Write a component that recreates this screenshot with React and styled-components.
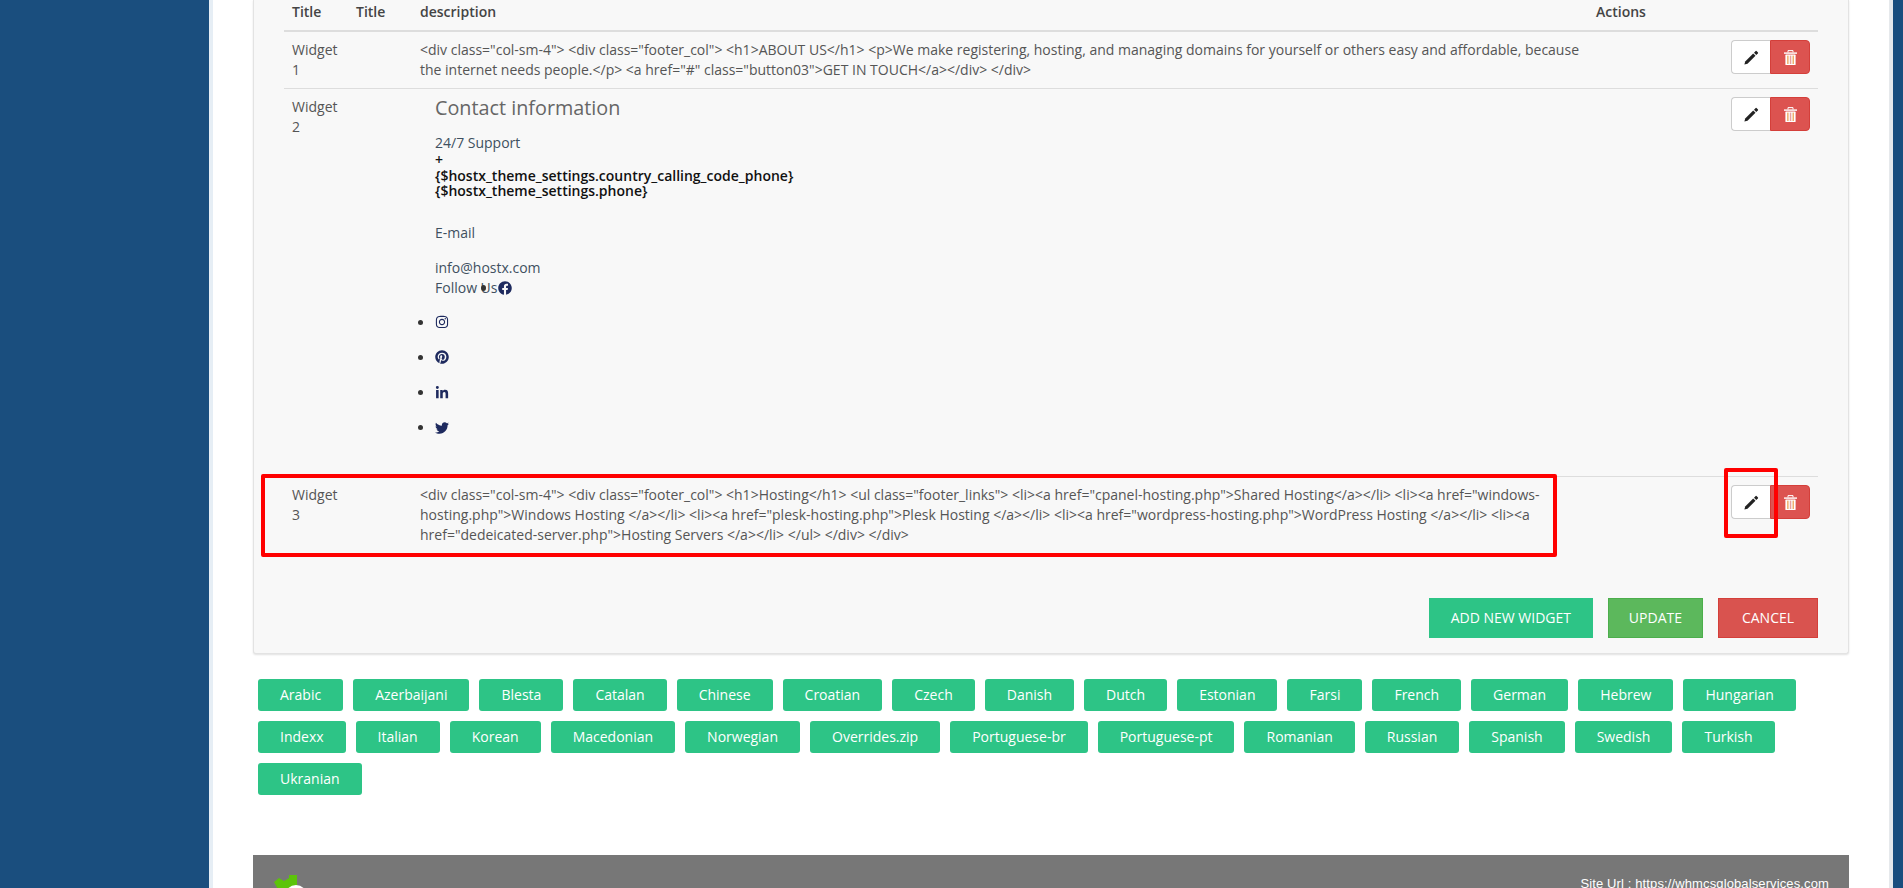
import styled, { createGlobalStyle } from "styled-components";
import { FaFacebook, FaInstagram, FaPinterest, FaLinkedinIn, FaTwitter } from "react-icons/fa";

const languages = [
  "Arabic", "Azerbaijani", "Blesta", "Catalan", "Chinese", "Croatian", "Czech", "Danish", "Dutch", "Estonian",
  "Farsi", "French", "German", "Hebrew", "Hungarian", "Indexx", "Italian", "Korean", "Macedonian", "Norwegian",
  "Overrides.zip", "Portuguese-br", "Portuguese-pt", "Romanian", "Russian", "Spanish", "Swedish", "Turkish", "Ukranian",
];

const GlobalStyle = createGlobalStyle`
  html, body { margin: 0; padding: 0; height: 100%; overflow: hidden; background: #fff; }
  body { font-family: "Open Sans", "Liberation Sans", sans-serif; font-size: 14px; line-height: 20px; color: #555; }
  * { box-sizing: border-box; }
`;

function PencilIcon() {
  return (
    <svg width="15" height="15" viewBox="0 0 15 15">
      <path d="M0.4 14.6 L1.2 11.5 L9.2 3.5 L11.5 5.8 L3.5 13.8 Z" fill="#222" />
      <path d="M10 2.7 L11.7 1 Q12.1 0.7 12.5 1 L14 2.5 Q14.3 2.9 14 3.3 L12.3 5 Z" fill="#222" />
    </svg>
  );
}

function TrashIcon() {
  return (
    <svg width="13" height="15" viewBox="0 0 13 15">
      <path d="M4 2.4 V0.6 H9 V2.4" fill="none" stroke="#fff" strokeWidth="1" />
      <rect x="0" y="2.4" width="13" height="1.4" fill="#fff" />
      <rect x="1.4" y="4.6" width="10.2" height="10.4" rx="0.6" fill="#fff" />
      <rect x="3.1" y="5.6" width="1.5" height="8.4" fill="#eeb06c" />
      <rect x="5.8" y="5.6" width="1.5" height="8.4" fill="#e9a0a0" />
      <rect x="8.5" y="5.6" width="1.5" height="8.4" fill="#eeb06c" />
    </svg>
  );
}

function RowActions() {
  return (
    <ActionGroup>
      <EditButton><PencilIcon /></EditButton>
      <DeleteButton><TrashIcon /></DeleteButton>
    </ActionGroup>
  );
}

function WidgetName({ n }) {
  return <>Widget {n}</>;
}

export default function App() {
  return (
    <>
      <GlobalStyle />
      <Page>
        <Sidebar />
        <Main>
          <Panel>
            <WidgetTable>
              <colgroup>
                <col width="64" />
                <col width="64" />
                <col width="1176" />
                <col />
              </colgroup>
              <thead>
                <tr>
                  <th>Title</th>
                  <th>Title</th>
                  <th>description</th>
                  <th>Actions</th>
                </tr>
              </thead>
              <tbody>
                <tr>
                  <td><WidgetName n={1} /></td>
                  <td></td>
                  <td>
                    {`<div class="col-sm-4"> <div class="footer_col"> <h1>ABOUT US</h1> <p>We make registering, hosting, and managing domains for yourself or others easy and affordable, because the internet needs people.</p> <a href="#" class="button03">GET IN TOUCH</a></div> </div>`}
                  </td>
                  <td><RowActions /></td>
                </tr>
                <tr>
                  <td><WidgetName n={2} /></td>
                  <td></td>
                  <td>
                    <Contact>
                      <ContactTitle>Contact information</ContactTitle>
                      <ContactLine $top={14}>24/7 Support</ContactLine>
                      <PhoneLines>
                        <div>+</div>
                        <div>{"{$hostx_theme_settings.country_calling_code_phone}"}</div>
                        <div>{"{$hostx_theme_settings.phone}"}</div>
                      </PhoneLines>
                      <ContactLine $top={24}>E-mail</ContactLine>
                      <ContactLine $top={15}>info@hostx.com</ContactLine>
                      <FollowLine>
                        <FollowText>Follow Us<StrayBullet /></FollowText>
                        <FaFacebook size={14} />
                      </FollowLine>
                      <SocialList>
                        <li><FaInstagram size={14} /></li>
                        <li><FaPinterest size={14} /></li>
                        <li><FaLinkedinIn size={14} /></li>
                        <li><FaTwitter size={14} /></li>
                      </SocialList>
                    </Contact>
                  </td>
                  <td><RowActions /></td>
                </tr>
                <tr>
                  <td><WidgetName n={3} /></td>
                  <td></td>
                  <td>
                    {`<div class="col-sm-4"> <div class="footer_col"> <h1>Hosting</h1> <ul class="footer_links"> <li><a href="cpanel-hosting.php">Shared Hosting</a></li> <li><a href="windows-hosting.php">Windows Hosting </a></li> <li><a href="plesk-hosting.php">Plesk Hosting </a></li> <li><a href="wordpress-hosting.php">WordPress Hosting </a></li> <li><a href="dedeicated-server.php">Hosting Servers </a></li> </ul> </div> </div>`}
                  </td>
                  <td><RowActions /></td>
                </tr>
              </tbody>
            </WidgetTable>

            <FormActions>
              <FormButton $bg="#2dc486" $line="#2dc486" $min={164}>ADD NEW WIDGET</FormButton>
              <FormButton $bg="#5cb85c" $line="#4cae4c">UPDATE</FormButton>
              <FormButton $bg="#d9534f" $line="#d43f3a" $min={100}>CANCEL</FormButton>
            </FormActions>

            <Highlight $left={7} $top={474} $width={1296} $height={83} />
            <Highlight $left={1470} $top={468} $width={54} $height={70} />
          </Panel>

          <LanguageList>
            {languages.map((name) => (
              <LanguagePill key={name}>{name}</LanguagePill>
            ))}
          </LanguageList>

          <Footer>
            <svg width="32" height="32" viewBox="0 0 32 32">
              <path d="M0 7 L5 3 L10 6 L15 3 L15 0 L23 0 L23 14 L6 18 Z" fill="#5cc40a" />
              <circle cx="22" cy="21" r="11" fill="#fff" />
            </svg>
            <SiteUrl>Site Url : https://whmcsglobalservices.com</SiteUrl>
          </Footer>
        </Main>
        <RightRail />
      </Page>
    </>
  );
}

const Page = styled.div`
  display: flex;
  width: 1903px;
  height: 888px;
  overflow: hidden;
`;

const Sidebar = styled.aside`
  flex: 0 0 213px;
  background: #1a4e7e;
  border-right: 4px solid #e6eef5;
`;

const RightRail = styled.div`
  flex: 0 0 14px;
  background: #1a4e7e;
  border-left: 4px solid #e6e9ec;
`;

const Main = styled.main`
  flex: 1;
  min-width: 0;
  padding: 0 40px 0 40px;
`;

const Panel = styled.section`
  position: relative;
  height: 654px;
  padding: 0 30px;
  background: #f8f8f8;
  border: 1px solid #e3e3e3;
  border-top: 0;
  border-radius: 0 0 3px 3px;
  box-shadow: 0 1px 2px rgba(0, 0, 0, 0.12);
`;

const WidgetTable = styled.table`
  width: 1534px;
  table-layout: fixed;
  border-collapse: collapse;

  th {
    padding: 2px 8px 8px;
    text-align: left;
    font-weight: 600;
    color: #444;
    border-bottom: 2px solid #ddd;
  }
  td {
    padding: 8px;
    vertical-align: top;
    border-top: 1px solid #ddd;
  }
  tbody tr:first-child td {
    border-top: 0;
  }
`;

const ActionGroup = styled.div`
  display: flex;
  justify-content: flex-end;
`;

const IconButton = styled.button`
  display: flex;
  align-items: center;
  justify-content: center;
  width: 39px;
  height: 34px;
  padding: 0;
`;

const EditButton = styled(IconButton)`
  background: #fff;
  border: 1px solid #ccc;
  border-right: 0;
  border-radius: 4px 0 0 4px;
`;

const DeleteButton = styled(IconButton)`
  width: 40px;
  background: #dc5350;
  border: 1px solid #d43f3a;
  border-radius: 0 4px 4px 0;
`;

const Contact = styled.div`
  padding-left: 15px;
  height: 371px;
  color: #40505f;
`;

const ContactTitle = styled.div`
  font-size: 19.8px;
  line-height: 22px;
  color: #666;
`;

const ContactLine = styled.div`
  margin-top: ${(props) => props.$top}px;
`;

const PhoneLines = styled.div`
  margin-top: -1px;
  font-weight: 600;
  line-height: 15.5px;
  color: #111;
`;

const FollowLine = styled.div`
  display: flex;
  align-items: center;
  height: 20px;
  color: #40505f;

  svg {
    color: #1e2a5e;
  }
`;

const FollowText = styled.span`
  position: relative;
`;

const StrayBullet = styled.i`
  position: absolute;
  left: 46px;
  top: 7px;
  width: 5px;
  height: 6px;
  border-radius: 50%;
  background: #333;
`;

const SocialList = styled.ul`
  margin: 7px 0 0 0;
  padding: 0;
  list-style: none;
  color: #1e2a5e;

  li {
    position: relative;
    display: flex;
    align-items: center;
    height: 35.3px;
  }
  li::before {
    content: "";
    position: absolute;
    left: -17px;
    top: 15px;
    width: 5px;
    height: 5px;
    border-radius: 50%;
    background: #333;
  }
`;

const FormActions = styled.div`
  display: flex;
  justify-content: flex-end;
  gap: 15px;
  margin-top: 45px;
`;

const FormButton = styled.button`
  height: 40px;
  min-width: ${(props) => props.$min || 0}px;
  padding: 0 20px;
  font: 400 14px/20px "Open Sans", "Liberation Sans", sans-serif;
  color: #fff;
  background: ${(props) => props.$bg};
  border: 1px solid ${(props) => props.$line};
`;

const Highlight = styled.div`
  position: absolute;
  left: ${(props) => props.$left}px;
  top: ${(props) => props.$top}px;
  width: ${(props) => props.$width}px;
  height: ${(props) => props.$height}px;
  border: 4px solid #f00;
  border-radius: 2px;
`;

const LanguageList = styled.div`
  display: flex;
  flex-wrap: wrap;
  gap: 10px;
  padding: 25px 4px 0 5px;
  height: 201px;
  align-content: flex-start;
`;

const LanguagePill = styled.a`
  display: block;
  height: 32px;
  padding: 0 22px;
  font-size: 14px;
  line-height: 32px;
  color: #fff;
  background: #2dc486;
  border-radius: 3px;
`;

const Footer = styled.footer`
  display: flex;
  justify-content: space-between;
  height: 60px;
  padding: 20px 20px 0 21px;
  background: #777;
`;

const SiteUrl = styled.span`
  margin-top: -1px;
  font-family: "Liberation Sans", Arial, sans-serif;
  font-size: 13px;
  letter-spacing: 0.12px;
  color: #fff;
`;
